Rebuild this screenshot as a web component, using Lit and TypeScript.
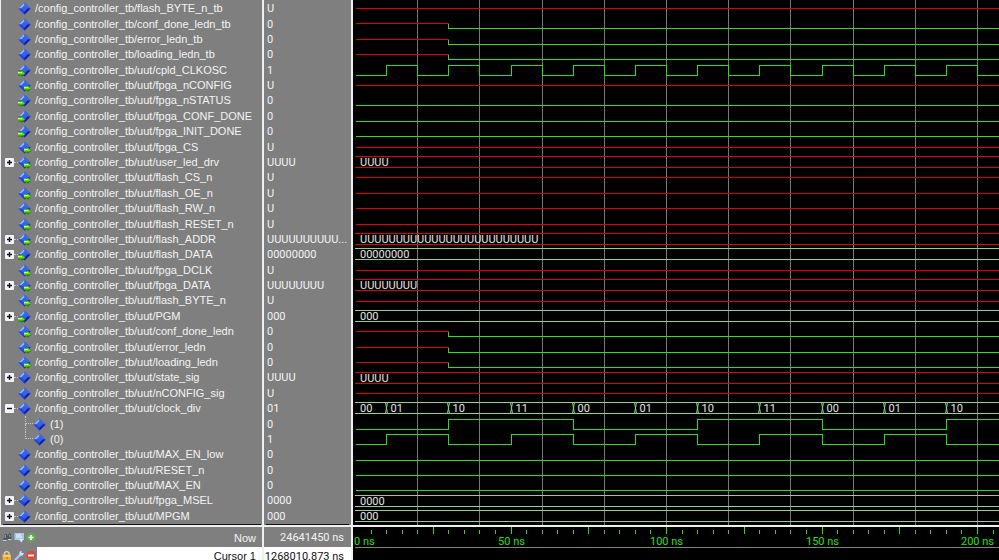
import { LitElement, html, svg, css, nothing } from "lit";
import { customElement, property, state } from "lit/decorators.js";

type Wave = "unknown" | "low" | "fall" | "clock" | "bus-unknown" | "bus" | "count" | "bit1" | "bit0";
interface Signal {
  name: string;
  value: string;
  wave: Wave;
  dir?: "in" | "out";
  tree?: "plus" | "minus" | "child";
  label?: string;
}

const TB = "/config_controller_tb/";
const UUT = TB + "uut/";
const U = "U";

const SIGNALS: Signal[] = [
  { name: TB + "flash_BYTE_n_tb", value: U, wave: "unknown" },
  { name: TB + "conf_done_ledn_tb", value: "0", wave: "fall" },
  { name: TB + "error_ledn_tb", value: "0", wave: "fall" },
  { name: TB + "loading_ledn_tb", value: "0", wave: "fall" },
  { name: UUT + "cpld_CLKOSC", value: "1", wave: "clock", dir: "in" },
  { name: UUT + "fpga_nCONFIG", value: U, wave: "unknown", dir: "out" },
  { name: UUT + "fpga_nSTATUS", value: "0", wave: "low", dir: "in" },
  { name: UUT + "fpga_CONF_DONE", value: "0", wave: "low", dir: "in" },
  { name: UUT + "fpga_INIT_DONE", value: "0", wave: "low", dir: "in" },
  { name: UUT + "fpga_CS", value: U, wave: "unknown", dir: "out" },
  { name: UUT + "user_led_drv", value: "UUUU", wave: "bus-unknown", dir: "out", tree: "plus" },
  { name: UUT + "flash_CS_n", value: U, wave: "unknown", dir: "out" },
  { name: UUT + "flash_OE_n", value: U, wave: "unknown", dir: "out" },
  { name: UUT + "flash_RW_n", value: U, wave: "unknown", dir: "out" },
  { name: UUT + "flash_RESET_n", value: U, wave: "unknown", dir: "out" },
  { name: UUT + "flash_ADDR", value: "UUUUUUUUUU...", label: U.repeat(25), wave: "bus-unknown", dir: "out", tree: "plus" },
  { name: UUT + "flash_DATA", value: "00000000", wave: "bus", dir: "in", tree: "plus" },
  { name: UUT + "fpga_DCLK", value: U, wave: "unknown", dir: "out" },
  { name: UUT + "fpga_DATA", value: "UUUUUUUU", wave: "bus-unknown", dir: "out", tree: "plus" },
  { name: UUT + "flash_BYTE_n", value: U, wave: "unknown", dir: "out" },
  { name: UUT + "PGM", value: "000", wave: "bus", dir: "in", tree: "plus" },
  { name: UUT + "conf_done_ledn", value: "0", wave: "fall", dir: "out" },
  { name: UUT + "error_ledn", value: "0", wave: "fall", dir: "out" },
  { name: UUT + "loading_ledn", value: "0", wave: "fall", dir: "out" },
  { name: UUT + "state_sig", value: "UUUU", wave: "bus-unknown", tree: "plus" },
  { name: UUT + "nCONFIG_sig", value: U, wave: "unknown" },
  { name: UUT + "clock_div", value: "01", wave: "count", tree: "minus" },
  { name: "(1)", value: "0", wave: "bit1", tree: "child" },
  { name: "(0)", value: "1", wave: "bit0", tree: "child" },
  { name: UUT + "MAX_EN_low", value: "0", wave: "low" },
  { name: UUT + "RESET_n", value: "0", wave: "low" },
  { name: UUT + "MAX_EN", value: "0", wave: "low" },
  { name: UUT + "fpga_MSEL", value: "0000", wave: "bus", tree: "plus" },
  { name: UUT + "MPGM", value: "000", wave: "bus", tree: "plus" },
];

/* Plot scale: pixels per nanosecond, and the height of one signal's row. */
const PX_PER_NS = 3.11;
const ROW = 15.4;
const START = 2;
const xAt = (ns: number) => Math.round(START + ns * PX_PER_NS) + 0.5;
const yAt = (y: number) => Math.round(y - 0.5) + 0.5;

@customElement("signal-icon")
class SignalIcon extends LitElement {
  @property() dir = "";
  static styles = css`
    :host { display: block; flex: none; width: 14px; height: 13px; }
    svg { display: block; }
  `;
  render() {
    const arrow = (x: number) => svg`
      <path d="M${x} 7.500H${x + 3.5}V6L${x + 7.5} 9.500L${x + 3.5} 13V11.500H${x}Z" fill="#1c7812"/>
      <path d="M${x} 7.500H${x + 3.5}V6.500L${x + 7} 9.500L${x + 5} 10.500H${x}Z" fill="#62e412"/>
      <path d="M${x} 8.500H${x + 4}" stroke="#ecf850"/>`;
    return html`<svg width="14" height="13" viewBox="0 0 14 13" aria-hidden="true">
      <path d="M6.500 0.500L0.500 6.500L6.500 12.500L12.500 6.500Z" fill="#1c3ccc"/>
      <path d="M6.500 0.500L0.500 6.500H3.500L6.500 3.500Z" fill="#8cb4fa"/>
      <path d="M6.500 0.500L12.500 6.500H9.500L6.500 3.500Z" fill="#3c6cec"/>
      <path d="M0.500 6.500H3.500L6.500 9.500V12.500Z" fill="#2448d8"/>
      <path d="M6.500 12.500V9.500L9.500 6.500H12.500Z" fill="#141ea4"/>
      <path d="M6.500 3.500L3.500 6.500L6.500 9.500L9.500 6.500Z" fill="#2c64f4"/>
      ${this.dir === "in" ? arrow(0) : this.dir === "out" ? arrow(6) : nothing}
    </svg>`;
  }
}

/* A strip with a time axis, drawn as far as the strip is wide. */
class TimeStrip extends LitElement {
  @state() protected span = 0;
  private watcher = new ResizeObserver(() => this.measure());
  private measure() {
    this.span = this.clientWidth;
  }
  connectedCallback() {
    super.connectedCallback();
    this.measure();
    this.watcher.observe(this);
  }
  disconnectedCallback() {
    this.watcher.disconnect();
    super.disconnectedCallback();
  }
  protected times(first: number, step: number, room = 0) {
    const list: number[] = [];
    for (let t = first; xAt(t) + room < this.span; t += step) list.push(t);
    return list;
  }
}

@customElement("wave-plot")
class WavePlot extends TimeStrip {
  static styles = css`
    :host { display: block; min-width: 0; overflow: hidden; background: #000; }
    svg { display: block; width: 100%; height: 525px; }
    path { fill: none; shape-rendering: crispEdges; }
    text { font: 11px Roboto, sans-serif; fill: #e4e4e4; }
    .grid { stroke: #787878; }
    .red { stroke: #e40000; }
    .green { stroke: #28e014; }
    .bus { stroke: #90d090; }
    .cross { stroke: #90d090; shape-rendering: auto; }
  `;

  private steps(c: number, level: (ns: number) => boolean) {
    const hi = yAt(c - 5), lo = yAt(c + 5);
    let on = level(0);
    let d = `M${START + 1} ${on ? hi : lo}`;
    for (const t of this.times(10, 10)) {
      if (level(t) !== on) {
        on = !on;
        d += `H${xAt(t)}V${on ? hi : lo}`;
      }
    }
    return svg`<path class="green" d=${d + "H" + this.span}/>`;
  }

  private rails(c: number, kind: string) {
    return svg`<path class=${kind} d="M${START} ${yAt(c - 6)}H${this.span}M${START} ${yAt(c + 5)}H${this.span}"/>`;
  }

  private trace(s: Signal, i: number) {
    const c = 8.4 + i * ROW;
    const base = Math.floor(c) + 4;
    const end = this.span;
    const count = (t: number) => Math.floor((t + 10) / 20) % 4;
    switch (s.wave) {
      case "unknown":
        return svg`<path class="red" d="M${START + 1} ${yAt(c)}H${end}"/>`;
      case "low":
        return svg`<path class="green" d="M${START + 1} ${yAt(c + 5)}H${end}"/>`;
      case "fall":
        return svg`<path class="red" d="M${START + 1} ${yAt(c)}H${xAt(30)}"/>
          <path class="green" d="M${xAt(30)} ${yAt(c)}V${yAt(c + 5)}H${end}"/>`;
      case "clock":
        return this.steps(c, (t) => t % 20 === 10);
      case "bit1":
        return this.steps(c, (t) => count(t) >= 2);
      case "bit0":
        return this.steps(c, (t) => count(t) % 2 === 1);
      case "bus":
      case "bus-unknown":
        return svg`${this.rails(c, s.wave === "bus" ? "bus" : "red")}
          <text x="7" y=${base}>${s.label ?? s.value}</text>`;
      case "count": {
        const top = yAt(c - 6), bottom = yAt(c + 5);
        return svg`${this.rails(c, "bus")}
          <text x="7" y=${base}>00</text>
          ${this.times(10, 20, 18).map((t) => {
            const x = xAt(t);
            return svg`<path class="cross" d="M${x - 1} ${top}L${x + 1} ${bottom}M${x + 1} ${top}L${x - 1} ${bottom}"/>
              <text x=${x + 4} y=${base}>${count(t).toString(2).padStart(2, "0")}</text>`;
          })}`;
      }
    }
  }

  render() {
    const grid = this.times(20, 20).map((t) => `M${xAt(t)} 0V525`).join("");
    return html`<svg role="img" aria-label="Signal waveforms">
      <path class="grid" d=${grid}/>
      ${SIGNALS.map((s, i) => this.trace(s, i))}
    </svg>`;
  }
}

@customElement("time-ruler")
class TimeRuler extends TimeStrip {
  static styles = css`
    :host { display: block; min-width: 0; overflow: hidden; background: #000; }
    svg { display: block; width: 100%; height: 33px; }
    path { fill: none; stroke: #28e014; shape-rendering: crispEdges; }
    .base { stroke: #808080; }
    text { font: 11px Roboto, sans-serif; fill: #28e014; text-anchor: middle; }
    .first { text-anchor: start; }
  `;
  render() {
    const ticks = this.times(5, 5).map((t) => (t % 25 === 0 ? `M${xAt(t)} 0V7` : `M${xAt(t)} 3V7`)).join("");
    return html`<svg role="img" aria-label="Time ruler">
      <path d=${ticks}/>
      <path class="base" d="M${START} 20.500H${this.span}"/>
      <text class="first" x="1" y="18">0 ns</text>
      ${this.times(50, 50, 20).map((t) => svg`<text x=${xAt(t)} y="18">${t} ns</text>`)}
    </svg>`;
  }
}

@customElement("app-root")
class AppRoot extends LitElement {
  static styles = css`
    :host {
      display: grid;
      grid-template-columns: 353px minmax(0, 1fr);
      grid-template-rows: minmax(525px, 1fr) 33px;
      row-gap: 2px;
      height: 100vh;
      overflow: hidden;
      background: #f0f0f0;
      font: 11px/15px "Liberation Sans", Arial, sans-serif;
      color: #f4f4f4;
    }
    table, tbody { display: grid; margin: 0; }
    tr { display: grid; grid-template-columns: 262px 87px; column-gap: 2px; }
    th, td { display: flex; align-items: center; padding: 0; font-weight: normal; white-space: nowrap; min-width: 0; }
    td { font-family: Roboto, sans-serif; }
    .left {
      display: grid;
      grid-template-rows: 524px 1px 1fr;
      background:
        linear-gradient(#7f7f7f, #7f7f7f) 1px 0 / 261px 100% no-repeat,
        linear-gradient(#7f7f7f, #7f7f7f) 264px 0 / 87px 100% no-repeat,
        #f0f0f0;
    }
    .signals tbody { grid-template-rows: repeat(34, minmax(0, 1fr)); height: 523px; padding-top: 1px; }
    .signals th { padding-left: 5px; }
    .signals td { padding-left: 3px; }
    .end { display: grid; grid-template-columns: 258px 83px; column-gap: 5px; padding-left: 3px; }
    .end span { background: #101010; }
    .toggle, .gap { flex: none; width: 9px; height: 9px; }
    .toggle { padding: 0; border: 0; border-radius: 1px; background: #f4f4fa; }
    .toggle svg, .tool svg { display: block; }
    .link { flex: none; width: 4px; }
    .dotted { border-top: 1px dotted #c8c8c8; }
    .branch { flex: none; width: 8px; height: 100%; margin-left: 11px; display: grid; grid-template-rows: 1fr 1fr; }
    .branch i { border-left: 1px dotted #c8c8c8; }
    .branch i:first-child { border-bottom: 1px dotted #c8c8c8; }
    .branch.last i:last-child { border-left-color: transparent; }
    .name { padding-left: 3px; }
    .status { grid-template-rows: 20px 17px; overflow: hidden; }
    .status tbody { display: contents; }
    .status th, .status td { background: #7f7f7f; }
    .status td { justify-content: flex-end; padding: 1px 7px 0 0; }
    .tools { display: flex; flex: none; gap: 1px; width: 35px; padding-left: 2px; }
    .caption { flex: 1; padding: 1px 6px 0 0; text-align: right; line-height: 16px; }
    .tool { width: 11px; height: 11px; padding: 0; border: 0; background: none; }
    .cursor td, .cursor .caption { background: #fff; color: #101010; }
  `;

  private toggle(kind: string) {
    return html`<button class="toggle" aria-label=${kind === "plus" ? "Expand" : "Collapse"}>
      <svg width="9" height="9" viewBox="0 0 9 9"><path d=${kind === "plus" ? "M2 4.5H7M4.5 2V7" : "M2 4.5H7"} stroke="#101018" stroke-width="1.400"/></svg>
    </button>`;
  }

  private lead(s: Signal) {
    if (s.tree === "child")
      return html`<span class="gap"></span><span class=${s.name === "(0)" ? "branch last" : "branch"}><i></i><i></i></span>`;
    if (s.tree) return html`${this.toggle(s.tree)}<span class="link dotted"></span>`;
    return html`<span class="gap"></span><span class="link"></span>`;
  }

  private row(s: Signal) {
    return html`<tr>
      <th scope="row">${this.lead(s)}<signal-icon dir=${s.dir ?? ""}></signal-icon><span class="name">${s.name}</span></th>
      <td>${s.value}</td>
    </tr>`;
  }

  private tool(label: string, art: unknown) {
    return html`<button class="tool" aria-label=${label}><svg width="11" height="11" viewBox="0 0 11 11">${art}</svg></button>`;
  }

  render() {
    return html`
      <section class="left">
        <table class="signals"><tbody>${SIGNALS.map((s) => this.row(s))}</tbody></table>
        <div class="end"><span></span><span></span></div>
      </section>
      <wave-plot></wave-plot>
      <table class="status"><tbody>
        <tr>
          <th scope="row">
            <span class="tools">
              ${this.tool("Find", svg`<path d="M1 8L3 2H5L5.500 4L7 1.500H8.500L9.500 7Z" fill="#4c5460"/><path d="M1 8.500H4.500M6 7.500H9.500" stroke="#b8d0e8"/><path d="M3.500 3L3 6M7.500 3L8 5" stroke="#a0a8b0"/>`)}
              ${this.tool("Properties", svg`<rect x="0.500" y="1" width="9.500" height="7" fill="#a8c8ec"/><path d="M2 3H7M2 5H8" stroke="#eef6ff"/><path d="M4.500 7H9.500L7.500 10.500Z" fill="#dce6f4"/>`)}
              ${this.tool("Add cursor", svg`<circle cx="5" cy="5.500" r="4.500" fill="#58b050"/><path d="M2.500 5.500H7.500M5 3V8" stroke="#fff" stroke-width="1.600"/>`)}
            </span>
            <span class="caption">Now</span>
          </th>
          <td>24641450 ns</td>
        </tr>
        <tr class="cursor">
          <th scope="row">
            <span class="tools">
              ${this.tool("Lock cursor", svg`<path d="M2.500 5V3Q4.500 0 7 3V5" fill="none" stroke="#e0d0a0" stroke-width="1.500"/><rect x="0.500" y="4.500" width="8.500" height="6" fill="#f0b040"/><path d="M1 6H8.500" stroke="#ffe49a"/><path d="M4 8H6" stroke="#a86810"/>`)}
              ${this.tool("Edit cursor", svg`<path d="M1 10L6.500 4.500" stroke="#a8c4f0" stroke-width="2.400"/><path d="M5.500 4.500V2L7.500 0.500V3H10L9 5L7 6Z" fill="#d4e2f8"/>`)}
              ${this.tool("Remove cursor", svg`<circle cx="5" cy="5.500" r="4.500" fill="#e04838"/><path d="M2 5.500H8" stroke="#fff" stroke-width="1.800"/>`)}
            </span>
            <span class="caption">Cursor 1</span>
          </th>
          <td>1268010.873 ns</td>
        </tr>
      </tbody></table>
      <time-ruler></time-ruler>
    `;
  }
}
